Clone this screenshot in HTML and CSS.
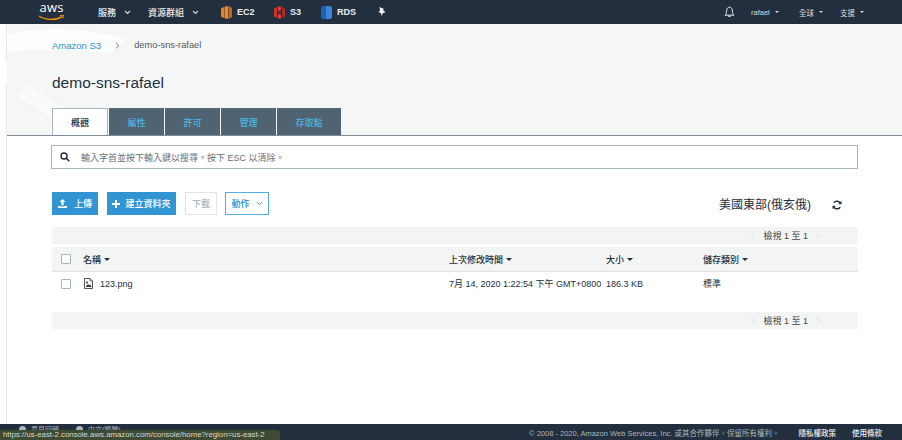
FILE: index.html
```html
<!DOCTYPE html>
<html lang="zh-Hant">
<head>
<meta charset="utf-8">
<title>demo-sns-rafael</title>
<link rel="stylesheet" href="styles.css">
</head>
<body>
<header class="topbar">
  <div class="logo"><span class="logo-text">aws</span>
    <svg class="smile" width="27" height="6" viewBox="0 0 27 6"><path d="M1 1c7 4.500 17 4.500 23 .6" fill="none" stroke="#f90" stroke-width="1.300"/><path d="M22 .5l3.500-.3-.8 3.200" fill="none" stroke="#f90" stroke-width="1"/></svg>
  </div>
  <nav class="nav-left">
    <span class="nav-item nav-services">服務<svg class="chev" width="7" height="5" viewBox="0 0 7 5"><path d="M1 1l2.500 2.500L6 1" fill="none" stroke="#d5dbdb" stroke-width="1.100"/></svg></span>
    <span class="nav-item nav-groups">資源群組<svg class="chev" width="7" height="5" viewBox="0 0 7 5"><path d="M1 1l2.500 2.500L6 1" fill="none" stroke="#d5dbdb" stroke-width="1.100"/></svg></span>
    <span class="nav-item nav-bold nav-ec2"><svg width="11" height="13" viewBox="0 0 11 13"><path d="M0 2.500L3 1v11l-3-1.500z" fill="#e8841f"/><path d="M3.500 .8L7 0v13l-3.500-.8z" fill="#f08c25"/><path d="M7.500 0L11 2v9l-3.500 2z" fill="#c8681a"/></svg>EC2</span>
    <span class="nav-item nav-bold nav-s3"><svg width="11" height="13" viewBox="0 0 11 13"><path d="M0 2.500L3 1v11l-3-1.500z" fill="#c7352c"/><path d="M11 2.500L8 1v11l3-1.500z" fill="#a82c25"/><path d="M4 .5h3v3.500L4 5zM4 8l3 1v3.500H4z" fill="#d8473b"/><path d="M4 5.500h3v2H4z" fill="#8e2620"/></svg>S3</span>
    <span class="nav-item nav-bold nav-rds"><svg width="11" height="13" viewBox="0 0 11 13"><path d="M0 2c0-1 1-2 2-2h3v13H2c-1 0-2-1-2-2z" fill="#1f5fb4"/><path d="M5 0h4c1 0 2 1 2 2v9c0 1-1 2-2 2H5z" fill="#3a85d6"/></svg>RDS</span>
    <svg class="pin" width="9" height="10" viewBox="0 0 9 10"><path d="M2.500 0l4.500 2-1 1 2.500 2.500L6 6 4.500 9 4 6 1.500 5.200 3 3.500z" fill="#f2f3f3"/></svg>
  </nav>
  <nav class="nav-right">
    <svg class="bell" width="11" height="12" viewBox="0 0 11 12"><path d="M1 9.200c1.200-1 1.500-2 1.500-4C2.500 2.800 3.800 1.200 5.500 1.200S8.500 2.800 8.500 5.200c0 2 .3 3 1.500 4z" fill="none" stroke="#eaeded" stroke-width="1"/><path d="M4.300 10.300h2.400" stroke="#eaeded" stroke-width="1.200"/></svg>
    <span class="util util-user">rafael<i class="caret"></i></span>
    <span class="util util-region">全球<i class="caret"></i></span>
    <span class="util util-help">支援<i class="caret"></i></span>
  </nav>
</header>

<div class="shell">
  <aside class="rail"><button class="rail-toggle" aria-label="toggle"><i class="rail-arrow"></i></button></aside>
  <main class="main">
    <section class="hero">
      <svg class="watermark" width="200" height="111" viewBox="0 0 200 111"><path d="M-10 12c40-10 100-8 130 4L100 30C70 24 30 24 0 28z" fill="#fcfdfd"/><path d="M20 60l80 50h-30L10 72z" fill="#f9fbfa"/></svg>
      <div class="crumbs"><a class="crumb-link">Amazon S3</a><svg class="crumb-sep" width="5" height="7" viewBox="0 0 5 7"><path d="M1 .8L3.800 3.500 1 6.200" fill="none" stroke="#545b64" stroke-width=".8"/></svg><span class="crumb-current">demo-sns-rafael</span></div>
      <h1 class="title">demo-sns-rafael</h1>
      <div class="tabs">
        <span class="tab tab-active tab-1">概觀</span>
        <span class="tab tab-2">屬性</span>
        <span class="tab tab-3">許可</span>
        <span class="tab tab-4">管理</span>
        <span class="tab tab-5">存取點</span>
      </div>
    </section>

    <section class="content">
      <div class="search">
        <svg width="10" height="10" viewBox="0 0 10 10"><circle cx="4" cy="4" r="3" fill="none" stroke="#232f3e" stroke-width="1.400"/><path d="M6.300 6.300L9.300 9.300" stroke="#232f3e" stroke-width="1.600"/></svg>
        <span class="search-text">輸入字首並按下輸入鍵以搜尋。按下 ESC 以清除。</span>
      </div>

      <div class="toolbar">
        <button class="btn btn-primary btn-upload"><svg width="9" height="9" viewBox="0 0 9 9"><path d="M4.500 0L7.500 3H5.600v3.200H3.400V3H1.500zM0 7h2.500v.6h4V7H9v2H0z" fill="#fff"/></svg>上傳</button>
        <button class="btn btn-primary btn-folder"><svg width="8" height="8" viewBox="0 0 8 8"><path d="M3 0h2v3h3v2H5v3H3V5H0V3h3z" fill="#fff"/></svg>建立資料夾</button>
        <button class="btn btn-disabled">下載</button>
        <button class="btn btn-outline">動作<svg width="7" height="5" viewBox="0 0 7 5"><path d="M1 1l2.500 2.500L6 1" fill="none" stroke="#2b8cc4" stroke-width=".8"/></svg></button>
        <span class="region">美國東部(俄亥俄)</span>
        <svg class="refresh" width="10" height="10" viewBox="0 0 10 10"><path d="M8.700 3.700A4 4 0 0 0 1.800 2.700M1.300 6.300a4 4 0 0 0 6.900 1" fill="none" stroke="#232f3e" stroke-width="1.500"/><path d="M9.500 .8v3.400H6.200zM.5 9.200V5.800h3.300z" fill="#232f3e"/></svg>
      </div>

      <div class="pager pager-top"><i class="pg-arrow pg-left"></i><span>檢視 1 至 1</span><i class="pg-arrow pg-right"></i></div>

      <div class="table">
        <div class="row row-head">
          <span class="cell"><i class="check"></i></span>
          <span class="cell">名稱<i class="sort"></i></span>
          <span class="cell">上次修改時間<i class="sort"></i></span>
          <span class="cell">大小<i class="sort"></i></span>
          <span class="cell">儲存類別<i class="sort"></i></span>
        </div>
        <div class="row row-body">
          <span class="cell"><i class="check"></i></span>
          <span class="cell cell-name"><svg width="9" height="11" viewBox="0 0 9 11"><path d="M.5.500h5.500L8.500 3v7.500h-8z" fill="none" stroke="#444" stroke-width=".9"/><path d="M6 .5V3h2.500" fill="none" stroke="#444" stroke-width=".7"/><circle cx="3" cy="4.500" r="1" fill="#333"/><path d="M1.500 9L4 6l1.500 1.500L6.500 6.500 7.500 9z" fill="#333"/></svg>123.png</span>
          <span class="cell">7月 14, 2020 1:22:54 下午 GMT+0800</span>
          <span class="cell">186.3 KB</span>
          <span class="cell">標準</span>
        </div>
      </div>

      <div class="pager pager-bottom"><i class="pg-arrow pg-left"></i><span>檢視 1 至 1</span><i class="pg-arrow pg-right"></i></div>
    </section>
  </main>
</div>

<footer class="footer">
  <div class="foot-left"><i class="foot-dot"></i><span class="foot-hidden">意見回饋</span><i class="foot-dot"></i><span class="foot-hidden">中文(繁體)</span></div>
  <div class="foot-right">
    <span class="copy">© 2008 - 2020, Amazon Web Services, Inc. 或其合作夥伴。保留所有權利。</span>
    <span class="foot-link foot-privacy">隱私權政策</span>
    <span class="foot-link">使用條款</span>
  </div>
</footer>
<div class="status">https://us-east-2.console.aws.amazon.com/console/home?region=us-east-2</div>
</body>
</html>
```

FILE: styles.css
```css
* { box-sizing: border-box; }
html, body { margin: 0; height: 100%; }
body {
  position: relative;
  width: 902px;
  height: 440px;
  overflow: hidden;
  display: flex;
  flex-direction: column;
  background: #fff;
  color: #16191f;
  font-family: "Liberation Sans", "Noto Sans CJK TC", sans-serif;
  font-size: 9px;
}
i { display: block; }

/* top bar */
.topbar {
  flex: 0 0 24px;
  height: 24px;
  background: #232f3e;
  display: flex;
  align-items: center;
  justify-content: space-between;
  color: #eaeded;
}
.logo {
  position: relative;
  width: 27px;
  height: 20px;
  margin-left: 38px;
  flex: none;
}
.logo-text {
  display: block;
  font-family: "Open Sans", "Liberation Sans", sans-serif;
  font-size: 13px;
  line-height: 13px;
  letter-spacing: .2px;
  color: #fff;
  text-align: center;
  margin-top: -1px;
}
.smile { position: absolute; left: 0; top: 13px; }
.nav-left { display: flex; align-items: center; flex: 1; margin-left: 33px; }
.nav-item { display: flex; align-items: center; font-size: 9px; color: #eaeded; font-weight: 500; }
.nav-services { width: 50px; }
.nav-services .chev { margin-left: 8px; }
.nav-groups { width: 73px; }
.nav-groups .chev { margin-left: 8px; }
.nav-bold { font-weight: 700; font-size: 9px; color: #eaeded; }
.nav-bold svg { margin-right: 5px; }
.nav-ec2 { width: 53px; }
.nav-s3 { width: 47px; }
.nav-rds { width: 55px; }
.pin { margin-left: 1px; }
.nav-right { display: flex; align-items: center; flex: none; padding-right: 37px; font-size: 7px; }
.bell { margin-right: 16px; }
.util { display: flex; align-items: center; font-size: 7.500px; color: #d5dbdb; }
.util-user { width: 48px; }
.util-region { width: 41px; }
.util-help { width: 25px; }
.caret {
  width: 0;
  height: 0;
  margin-left: 5px;
  border-left: 2.500px solid transparent;
  border-right: 2.500px solid transparent;
  border-top: 2.500px solid #d5dbdb;
}

/* shell */
.shell { flex: 1; display: flex; min-height: 0; }
.rail {
  position: relative;
  flex: 0 0 7px;
  background: #fff;
  border-right: 1px solid #e6e8e8;
}
.rail-toggle {
  position: absolute;
  left: 6px;
  top: 37px;
  width: 11px;
  height: 24px;
  padding: 0;
  background: #fff;
  border: 1px solid #e1e4e4;
  border-left: 0;
  border-radius: 0 3px 3px 0;
  display: flex;
  align-items: center;
  justify-content: center;
}
.rail-arrow {
  width: 0;
  height: 0;
  margin-right: 1px;
  border-top: 3px solid transparent;
  border-bottom: 3px solid transparent;
  border-left: 3px solid #232f3e;
}
.main { flex: 1; min-width: 0; }

/* hero */
.hero {
  position: relative;
  height: 112px;
  background: #f5f7f6;
  border-bottom: 1px solid #7f8d99;
  padding-left: 45px;
  overflow: hidden;
}
.watermark { position: absolute; left: 0; top: 0; }
.crumbs {
  position: relative;
  display: flex;
  align-items: center;
  height: 14px;
  margin-top: 14px;
  font-size: 9.500px;
}
.crumb-link { color: #2b8ed0; }
.crumb-sep { margin: 0 14px 0 14px; }
.crumb-current { color: #545b64; font-size: 9.300px; }
.title {
  position: relative;
  margin: 21px 0 0;
  font-size: 15.500px;
  line-height: 20px;
  font-weight: 400;
  color: #232f3e;
}
.tabs { position: absolute; left: 45px; bottom: -1px; display: flex; height: 28px; }
.tab {
  display: flex;
  align-items: center;
  justify-content: center;
  height: 27px;
  background: #4f6373;
  color: #4fb3e8;
  font-size: 9px;
  font-weight: 500;
  margin-right: 1px;
  border-top: 1px solid #5a6b78;
  margin-top: 0;
}
.tab-1 { width: 56px; height: 28px; background: #fff; color: #232f3e; border: 1px solid #aab7b8; border-bottom: 0; margin-right: 1px; }
.tab-2 { width: 55px; }
.tab-3 { width: 55px; }
.tab-4 { width: 55px; }
.tab-5 { width: 64px; }

/* content */
.content { padding: 9px 44px 0 45px; }
.search {
  display: flex;
  align-items: center;
  height: 24px;
  margin-left: -1px;
  padding-left: 8px;
  background: #fff;
  border: 1px solid #aab7b8;
}
.search-text { margin-left: 11px; color: #687078; font-size: 9px; }
.toolbar { display: flex; align-items: center; height: 23px; margin-top: 23px; }
.btn {
  display: flex;
  align-items: center;
  justify-content: center;
  height: 23px;
  padding: 0;
  font-family: inherit;
  font-size: 9px;
  font-weight: 500;
  border: 1px solid transparent;
  background: #fff;
}
.btn-primary { background: #3195d4; color: #fff; }
.btn-upload { width: 46px; gap: 7px; margin-right: 9px; }
.btn-folder { width: 69px; gap: 5px; margin-right: 9px; }
.btn-disabled { width: 32px; color: #aab7b8; border-color: #e3e6e6; margin-right: 8px; }
.btn-outline { width: 44px; gap: 6px; color: #2b8ed0; border-color: #55aee8; }
.region { margin-left: auto; font-size: 12px; color: #232f3e; }
.refresh { margin: 2px 16px 0 21px; }

.pager {
  display: flex;
  align-items: center;
  justify-content: flex-end;
  height: 17px;
  padding-right: 39px;
  background: #f3f5f4;
  font-size: 9px;
  color: #444;
  gap: 8px;
}
.pg-arrow { width: 3px; height: 5px; border: solid #e3e7e7; border-width: 1px 0 0 1px; transform: rotate(-45deg); }
.pg-right { transform: rotate(135deg); }
.pager-top { margin-top: 12px; }
.pager-bottom { margin-top: 17px; }

.table { margin-top: 3px; }
.row {
  display: grid;
  grid-template-columns: 31px 366px 157px 97px 1fr;
  align-items: center;
  font-size: 9px;
}
.row-head { height: 25px; background: #f3f5f4; border-bottom: 1px solid #dfe3e3; font-weight: 500; color: #232f3e; }
.row-body { height: 23px; color: #232f3e; }
.cell { display: flex; align-items: center; white-space: nowrap; }
.check {
  width: 10px;
  height: 10px;
  margin-left: 9px;
  background: #fff;
  border: 1px solid #aab7b8;
  border-radius: 1px;
}
.sort {
  width: 0;
  height: 0;
  margin-left: 3px;
  border-left: 3px solid transparent;
  border-right: 3px solid transparent;
  border-top: 3px solid #232f3e;
}
.cell-name svg { margin: 0 7px 0 1px; }

/* footer */
.footer {
  flex: 0 0 16px;
  height: 16px;
  background: #232f3e;
  display: flex;
  align-items: center;
  justify-content: space-between;
}
.foot-left { display: flex; align-items: center; gap: 5px; padding-left: 19px; margin-top: -5px; color: #aab7b8; font-size: 7px; }
.foot-dot { width: 7px; height: 7px; border-radius: 50%; background: #aab7b8; margin-left: 12px; }
.foot-dot:first-child { margin-left: 0; }
.foot-hidden { line-height: 8px; }
.foot-right { display: flex; align-items: center; padding-right: 20px; font-size: 7.500px; color: #aab7b8; }
.foot-link { color: #eaeded; font-weight: 500; font-size: 7.500px; }
.foot-privacy { margin: 0 16px 0 19px; }

/* browser status tooltip */
.status {
  position: absolute;
  left: 0;
  bottom: 0;
  width: 280px;
  height: 10px;
  padding-left: 3px;
  background: #3f4a34;
  border-top-right-radius: 3px;
  color: #d5d9cf;
  font-size: 7.800px;
  line-height: 10px;
  white-space: nowrap;
  overflow: hidden;
}
```
